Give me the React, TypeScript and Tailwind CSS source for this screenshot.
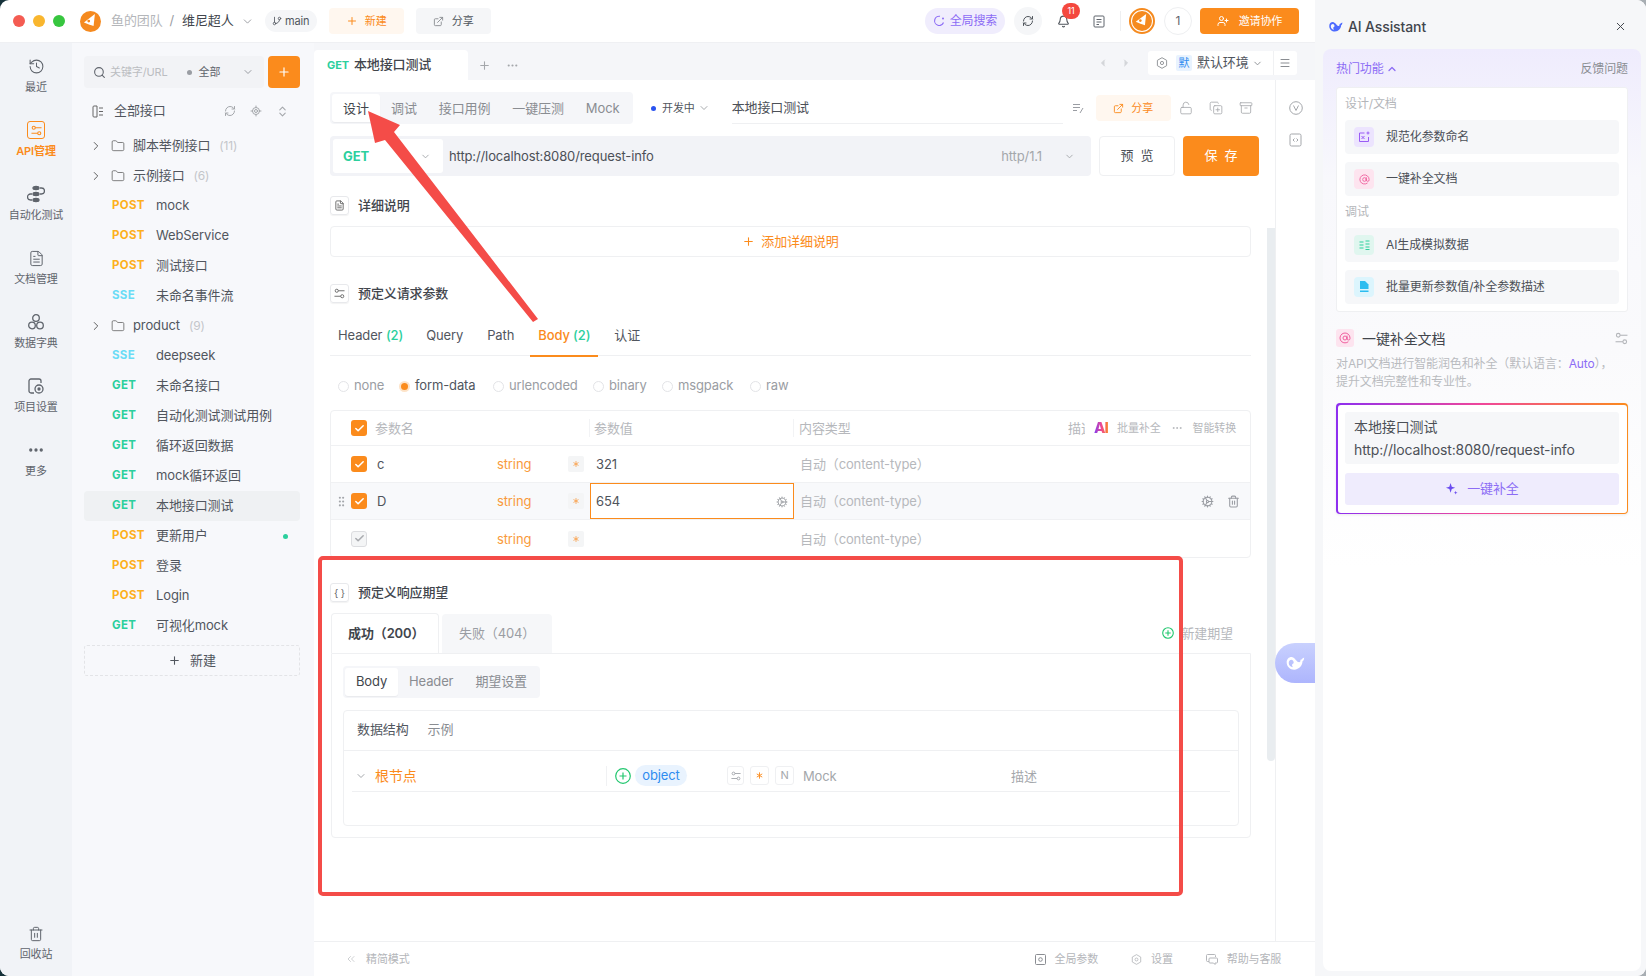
import React from "react";
import {
  History, FileText, Search, Plus, ChevronDown, ChevronRight, ChevronUp, ChevronLeft, Folder,
  RefreshCw, LocateFixed, ChevronsUpDown, Trash2, GitBranch, ExternalLink, Bell, LockOpen, CopyPlus, Archive,
  Menu, MoreHorizontal, X, ChevronsLeft, Check, Asterisk, GripVertical, UserPlus, AtSign, Cog,
} from "lucide-react";

const GET = "text-[#2ccf9d]";
const POST = "text-[#fdb01c]";
const SSE = "text-[#6adcf6]";

function Logo({ size = 21 }: { size?: number }) {
  return (
    <svg width={size} height={size} viewBox="0 0 24 24">
      <circle cx="12" cy="12" r="12" fill="#f58a1f" />
      <path d="M17 3.500 L15.500 17 L9.500 15 L4.500 13 Z" fill="#fff" />
      <circle cx="10" cy="11.500" r="1.600" fill="#f58a1f" />
    </svg>
  );
}

function Whale({ className = "", color = "#4d6bfe", size = 16 }: { className?: string; color?: string; size?: number }) {
  return (
    <svg width={size} height={size} viewBox="0 0 24 24" className={className}>
      <path
        fillRule="evenodd"
        d="M2 11 C2 7 5.500 4 9 5 C13 6.500 14 11 17 11 C18 11 18.800 10 18.500 8 C19.500 8.300 20 7.800 20.500 6.800 L23 5.500 C23 8 22.200 9.200 21 10 C21 15 17 20 11 20 C6 20 2 16 2 11 Z M8 8 C5.500 8 4.500 10 4.500 12 C4.500 15 7 17 9.500 17 C8 15 8 13 10 12.500 C11 12 10.500 8.500 8 8 Z"
        fill={color}
      />
    </svg>
  );
}

function GearHex({ size = 12 }: { size?: number }) {
  return (
    <svg width={size} height={size} viewBox="0 0 12 12" fill="none" stroke="currentColor" strokeWidth="0.900">
      <path d="M6 0.700 10.600 3.300v5.400L6 11.300 1.400 8.700V3.300Z" />
      <circle cx="6" cy="6" r="1.600" />
    </svg>
  );
}

function Sliders({ size = 11, width = 1 }: { size?: number; width?: number }) {
  return (
    <svg width={size} height={size} viewBox="0 0 12 12" fill="none" stroke="currentColor" strokeWidth={width}>
      <circle cx="3" cy="3" r="1.700" />
      <path d="M4.700 3H11.500" />
      <circle cx="9" cy="9" r="1.700" />
      <path d="M0.500 9H7.300" />
    </svg>
  );
}

function Star4({ size = 13 }: { size?: number }) {
  return (
    <svg width={size} height={size} viewBox="0 0 14 14" fill="#6a4cf0">
      <path d="M6 1 7.300 5 11 6.300 7.300 7.600 6 11.600 4.700 7.600 1 6.300 4.700 5Z" />
      <path d="M11.500 9.500 12 11 13.500 11.500 12 12 11.500 13.500 11 12 9.500 11.500 11 11Z" />
    </svg>
  );
}

function RailItem({ icon, label, active }: { icon: React.ReactNode; label: string; active?: boolean }) {
  return (
    <div className={`flex h-[64px] flex-col items-center pt-[6px] text-[11px] leading-[12px] ${active ? "font-semibold text-[#fb8b1c]" : "text-[#5f646c]"}`}>
      <div className="flex h-[20px] items-center justify-center">{icon}</div>
      <div className="mt-[5px] whitespace-nowrap">{label}</div>
    </div>
  );
}

function Method({ m }: { m: string }) {
  const c = m === "GET" ? GET : m === "POST" ? POST : SSE;
  return <span className={`w-[44px] shrink-0 text-[11.500px] font-bold tracking-[0.3px] ${c}`}>{m}</span>;
}

function ApiRow({ m, name, active, dot }: { m: string; name: string; active?: boolean; dot?: boolean }) {
  return (
    <div className={`ml-[12px] mr-[14px] flex h-[30px] items-center rounded-[4px] pl-[28px] pr-[12px] text-[13px] text-[#51565e] ${active ? "bg-[#eff1f3]" : ""}`}>
      <Method m={m} />
      <span className="flex-1">{name}</span>
      {dot && <span className="h-[5px] w-[5px] rounded-full bg-[#2ccf9d]" />}
    </div>
  );
}

function FolderRow({ name, count }: { name: string; count: string }) {
  return (
    <div className="flex h-[30px] items-center pl-[17px] text-[13px] text-[#51565e]">
      <ChevronRight size={14} strokeWidth={1.600} className="text-[#555]" />
      <Folder size={14} strokeWidth={1.400} className="ml-[8px] text-[#666]" />
      <span className="ml-[8px]">{name}</span>
      <span className="ml-[9px] text-[12px] text-[#c4c6ca]">{count}</span>
    </div>
  );
}

function SectionTitle({ icon, title }: { icon: React.ReactNode; title: string }) {
  return (
    <div className="flex h-[19px] items-center">
      <div className="flex h-[19px] w-[19px] items-center justify-center rounded-[3px] border border-[#e8e9ec] text-[#666] shadow-[0_1px_1px_rgba(0,0,0,0.05)]">{icon}</div>
      <span className="ml-[9px] text-[13px] font-medium text-[#41454c]">{title}</span>
    </div>
  );
}

function Radio({ label, on, w }: { label: string; on?: boolean; w: string }) {
  return (
    <div className={`flex items-center ${w} text-[13px] ${on ? "text-[#51565e]" : "text-[#9a9da3]"}`}>
      {on ? (
        <span className="flex h-[11px] w-[11px] items-center justify-center rounded-full bg-[#fde3c8]"><span className="h-[7px] w-[7px] rounded-full bg-[#fb8b1c]" /></span>
      ) : (
        <span className="h-[11px] w-[11px] rounded-full border border-[#e3e4e7]" />
      )}
      <span className="ml-[5px]">{label}</span>
    </div>
  );
}

function Check16({ off }: { off?: boolean }) {
  return (
    <span className={`flex h-[16px] w-[16px] shrink-0 items-center justify-center rounded-[3px] ${off ? "border border-[#dcdde0] bg-[#f4f5f6] text-[#a9abaf]" : "bg-[#fb8b1c] text-white"}`}>
      <Check size={11} strokeWidth={3.400} />
    </span>
  );
}

function ParamRow({ name, value, focus, last, hover }: { name: string; value?: string; focus?: boolean; last?: boolean; hover?: boolean }) {
  return (
    <div className={`relative flex h-[37px] items-center ${last ? "" : "border-b border-[#f0f1f3]"} ${hover ? "bg-[#f8f9fb]" : ""}`}>
      <div className="flex w-[20px] justify-center">{hover && <GripVertical size={13} className="text-[#a4a7ab]" />}</div>
      <Check16 off={last} />
      <span className="ml-[10px] w-[120px] pt-[2px] text-[13px] text-[#4f545b]">{name}</span>
      <span className="w-[71px] pt-[2px] text-[13px] text-[#f99a3c]">string</span>
      <span className="flex h-[16px] w-[16px] items-center justify-center rounded-[2px] bg-[#f4f5f6] text-[#f9a04a]"><Asterisk size={10} strokeWidth={2} /></span>
      <div className="w-[6px]" />
      <div className={`flex h-[36px] w-[204px] items-center px-[5px] pt-[1px] text-[13px] text-[#4f545b] ${focus ? "border border-[#fb8b1c] bg-white" : "pl-[6px]"}`}>
        <span className="flex-1">{value}</span>
        {focus && <Cog size={12} className="text-[#a4a7ab]" />}
      </div>
      <span className="ml-[6px] flex-1 pt-[2px] text-[13px] text-[#b6b8bc]">自动（content-type）</span>
      {hover && (
        <div className="mr-[10px] flex items-center gap-[13px] text-[#9a9da3]">
          <Cog size={13} />
          <Trash2 size={13} />
        </div>
      )}
    </div>
  );
}

function AiItem({ box, icon, label }: { box: string; icon: React.ReactNode; label: string }) {
  return (
    <div className="flex h-[34px] items-center rounded-[4px] bg-[#f6f7f9] pl-[9px]">
      <span className={`flex h-[20px] w-[20px] items-center justify-center rounded-[4px] ${box}`}>{icon}</span>
      <span className="ml-[12px] text-[12px] text-[#4c5057]">{label}</span>
    </div>
  );
}

function FootItem({ icon, label, cls }: { icon: React.ReactNode; label: string; cls: string }) {
  return (
    <div className={`flex items-center text-[11px] text-[#b4b6ba] ${cls}`}>
      {icon}
      <span className="ml-[9px]">{label}</span>
    </div>
  );
}

export default function App() {
  return (
    <div className="h-[976px] w-[1646px] bg-[linear-gradient(90deg,#16323a_50%,#a8aeb3_50%)]">
      <div className="relative flex h-[976px] w-[1646px] overflow-hidden rounded-[9px] bg-white font-['Inter','Noto_Sans_CJK_SC',sans-serif] tracking-[-0.12px] text-[#4c5057]">
        <div className="flex w-[1315px] shrink-0 flex-col">
          {/* Title bar */}
          <header className="flex h-[43px] shrink-0 items-center border-b border-[#eff0f3] pl-[13px] pr-[16px]">
            <span className="h-[12px] w-[12px] rounded-full bg-[#f45c52]" />
            <span className="ml-[8px] h-[12px] w-[12px] rounded-full bg-[#f9b62e]" />
            <span className="ml-[8px] h-[12px] w-[12px] rounded-full bg-[#37c63f]" />
            <span className="ml-[15px]"><Logo /></span>
            <span className="ml-[10px] text-[13px] text-[#b4b6ba]">鱼的团队</span>
            <span className="ml-[7px] text-[13px] text-[#9a9da3]">/</span>
            <span className="ml-[8px] text-[13px] text-[#41454c]">维尼超人</span>
            <ChevronDown size={13} strokeWidth={1.500} className="ml-[7px] text-[#8a8d92]" />
            <span className="ml-[11px] flex h-[22px] w-[52px] items-center justify-center rounded-full bg-[#f5f6f8] text-[11px] text-[#51565e]">
              <GitBranch size={10} className="mr-[3px]" />main
            </span>
            <span className="ml-[12px] flex h-[26px] w-[75px] items-center justify-center rounded-[4px] bg-[#fff7ef] text-[11px] text-[#fb8b1c]">
              <Plus size={12} className="mr-[7px]" />新建
            </span>
            <span className="ml-[12px] flex h-[26px] w-[75px] items-center justify-center rounded-[4px] bg-[#f5f6f8] text-[11px] text-[#51565e]">
              <ExternalLink size={11} className="mr-[8px] text-[#8a8d92]" />分享
            </span>
            <div className="flex-1" />
            <span className="flex h-[26px] w-[80px] items-center justify-center rounded-full bg-[#f0edfd] text-[12px] text-[#8c6cf5]">
              <svg width="12" height="12" viewBox="0 0 12 12" fill="none" stroke="currentColor" strokeWidth="1.100" className="mr-[5px]"><path d="M7 1.300A4.600 4.600 0 1 0 10.500 7.500" /><circle cx="10" cy="3.500" r="1" fill="currentColor" stroke="none" /></svg>
              全局搜索
            </span>
            <span className="ml-[9px] flex h-[28px] w-[28px] items-center justify-center rounded-full bg-[#f5f6f8] text-[#4f545b]"><RefreshCw size={12} /></span>
            <span className="relative ml-[15px] text-[#4f545b]">
              <Bell size={13} />
              <span className="absolute left-[5px] top-[-12px] flex h-[16px] w-[18px] items-center justify-center rounded-full bg-[#f4483e] text-[9px] leading-none text-white">11</span>
            </span>
            <span className="ml-[23px] text-[#5f646c]">
              <svg width="12" height="13" viewBox="0 0 12 13" fill="none" stroke="currentColor" strokeWidth="1"><rect x="1" y="1" width="10" height="11" rx="1" /><path d="M3.500 4.500h5M3.500 7h5M3.500 9.500h2.500" /></svg>
            </span>
            <span className="ml-[15px] h-[20px] w-px bg-[#eeeff1]" />
            <span className="ml-[8px] flex h-[26px] w-[26px] items-center justify-center rounded-full border-[2px] border-[#f58a1f]"><Logo size={20} /></span>
            <span className="ml-[9px] flex h-[28px] w-[28px] items-center justify-center rounded-full border border-[#eeeff1] text-[12px] text-[#5f646c]">1</span>
            <span className="ml-[8px] flex h-[26px] w-[99px] items-center justify-center rounded-[4px] bg-[#fb8b1c] text-[11px] text-white">
              <UserPlus size={12} className="mr-[10px]" />邀请协作
            </span>
          </header>

          <div className="flex min-h-0 flex-1">
            {/* Rail */}
            <nav className="flex w-[72px] shrink-0 flex-col bg-[#f1f3f7] pt-[7px]">
              <RailItem icon={<History size={17} strokeWidth={1.500} />} label="最近" />
              <RailItem active icon={<span className="flex h-[18px] w-[18px] items-center justify-center rounded-[3px] border-[1.500px] border-[#fb8b1c]"><Sliders size={11} width={1.200} /></span>} label="API管理" />
              <RailItem icon={<svg width="18" height="18" viewBox="0 0 18 18" fill="none" stroke="#5f646c" strokeWidth="1.300"><ellipse cx="9" cy="3" rx="3" ry="1.600" fill="#5f646c" /><ellipse cx="9" cy="9" rx="3" ry="1.600" fill="#5f646c" /><ellipse cx="9" cy="15" rx="3" ry="1.600" fill="#5f646c" /><path d="M13 3h1.500a2.500 2.500 0 0 1 0 6H13M5 9H3.500a2.500 2.500 0 0 0 0 6H5" /></svg>} label="自动化测试" />
              <RailItem icon={<FileText size={17} strokeWidth={1.400} />} label="文档管理" />
              <RailItem icon={<svg width="18" height="18" viewBox="0 0 18 18" fill="none" stroke="#5f646c" strokeWidth="1.300"><circle cx="9" cy="5" r="3.300" /><circle cx="5" cy="12.500" r="3.300" /><circle cx="13" cy="12.500" r="3.300" /></svg>} label="数据字典" />
              <RailItem icon={<svg width="18" height="18" viewBox="0 0 18 18" fill="none" stroke="#5f646c" strokeWidth="1.300"><path d="M7 16H4a2 2 0 0 1-2-2V4a2 2 0 0 1 2-2h8a2 2 0 0 1 2 2v2" /><circle cx="12" cy="12" r="4" /><circle cx="12" cy="12" r="1" fill="#5f646c" /></svg>} label="项目设置" />
              <RailItem icon={<MoreHorizontal size={18} strokeWidth={2.400} />} label="更多" />
              <div className="flex-1" />
              <div className="flex flex-col items-center pb-[16px] text-[11px] leading-[12px] text-[#5f646c]">
                <Trash2 size={16} strokeWidth={1.500} />
                <span className="mt-[6px]">回收站</span>
              </div>
            </nav>

            {/* Sidebar */}
            <aside className="flex w-[242px] shrink-0 flex-col bg-[#f7f8fb] pt-[13px]">
              <div className="flex items-center pl-[12px] pr-[14px]">
                <div className="flex h-[32px] w-[180px] items-center rounded-[4px] bg-[#f2f3f6] pl-[9px] pr-[10px]">
                  <Search size={13} className="text-[#5f646c]" />
                  <span className="ml-[4px] text-[11px] text-[#bbbdc1]">关键字/URL</span>
                  <span className="ml-[19px] h-[5px] w-[5px] rounded-full bg-[#9a9da3]" />
                  <span className="ml-[7px] text-[11px] text-[#5f646c]">全部</span>
                  <span className="flex-1" />
                  <ChevronDown size={12} className="text-[#9a9da3]" />
                </div>
                <span className="ml-[4px] flex h-[32px] w-[32px] items-center justify-center rounded-[4px] bg-[#fb8b1c] text-white"><Plus size={14} strokeWidth={2} /></span>
              </div>
              <div className="mt-[8px] flex h-[30px] items-center pl-[20px] text-[13px] text-[#51565e]">
                <svg width="12" height="13" viewBox="0 0 12 13" fill="none" stroke="#666" strokeWidth="1"><path d="M5 1H2a1 1 0 0 0-1 1v9a1 1 0 0 0 1 1h3M5 1v11M7 3h4M7 6.500h4M7 10h4" /></svg>
                <span className="ml-[10px]">全部接口</span>
                <span className="flex-1" />
                <RefreshCw size={12} className="text-[#a4a7ab]" />
                <LocateFixed size={12} className="ml-[14px] text-[#a4a7ab]" />
                <ChevronsUpDown size={13} className="ml-[14px] mr-[25px] text-[#a4a7ab]" />
              </div>
              <div className="mt-[5px]">
                <FolderRow name="脚本举例接口" count="(11)" />
                <FolderRow name="示例接口" count="(6)" />
                <ApiRow m="POST" name="mock" />
                <ApiRow m="POST" name="WebService" />
                <ApiRow m="POST" name="测试接口" />
                <ApiRow m="SSE" name="未命名事件流" />
                <FolderRow name="product" count="(9)" />
                <ApiRow m="SSE" name="deepseek" />
                <ApiRow m="GET" name="未命名接口" />
                <ApiRow m="GET" name="自动化测试测试用例" />
                <ApiRow m="GET" name="循环返回数据" />
                <ApiRow m="GET" name="mock循环返回" />
                <ApiRow m="GET" name="本地接口测试" active />
                <ApiRow m="POST" name="更新用户" dot />
                <ApiRow m="POST" name="登录" />
                <ApiRow m="POST" name="Login" />
                <ApiRow m="GET" name="可视化mock" />
              </div>
              <div className="ml-[12px] mr-[14px] mt-[4px] flex h-[31px] items-center justify-center rounded-[3px] border border-dashed border-[#e3e4e7] text-[13px] text-[#51565e]">
                <Plus size={13} className="mr-[9px]" />新建
              </div>
            </aside>

            {/* Main */}
            <main className="relative flex min-w-0 flex-1 flex-col">
              {/* Tab strip */}
              <div className="flex h-[37px] shrink-0 items-end bg-[#f5f6f9] pr-[18px]">
                <div className="flex h-[30px] w-[154px] items-center rounded-t-[4px] bg-white pl-[13px] text-[13px] text-[#41454c]">
                  <span className="mr-[5px] text-[11px] font-bold text-[#2ccf9d]">GET</span>
                  <span className="font-medium">本地接口测试</span>
                </div>
                <div className="flex h-[30px] items-center text-[#a4a7ab]">
                  <Plus size={13} className="ml-[10px]" />
                  <MoreHorizontal size={13} className="ml-[15px]" />
                </div>
                <div className="flex-1" />
                <div className="mb-[5px] flex h-[24px] items-center text-[#d3d5d9]">
                  <ChevronLeft size={12} fill="currentColor" />
                  <ChevronRight size={12} fill="currentColor" className="ml-[11px]" />
                  <div className="ml-[16px] flex h-[24px] w-[149px] items-center rounded-[3px] bg-white pl-[8px] text-[#8a8d92]">
                    <GearHex />
                    <span className="ml-[8px] flex h-[16px] w-[16px] items-center justify-center rounded-[2px] bg-[#e9f3fe] text-[11px] text-[#2e8cf0]">默</span>
                    <span className="ml-[5px] text-[13px] text-[#51565e]">默认环境</span>
                    <ChevronDown size={11} className="ml-[3px]" />
                    <span className="ml-[10px] flex h-[24px] w-[24px] items-center justify-center border-l border-[#f0f1f3]"><Menu size={12} /></span>
                  </div>
                </div>
              </div>

              <div className="flex min-h-0 flex-1">
                <div className="w-[961px] shrink-0 pl-[16px] pr-[24px] pt-[12px]">
                  {/* Tool row */}
                  <div className="flex h-[32px] items-center">
                    <div className="flex h-[32px] w-[303px] shrink-0 items-center rounded-[4px] bg-[#f5f6f9] pl-[2px] text-[13px] text-[#8a8d92]">
                      <span className="flex h-[28px] w-[48px] items-center justify-center rounded-[3px] bg-white pt-[1px] text-[#41454c] shadow-[0_1px_1px_rgba(0,0,0,0.05)]">设计</span>
                      <span className="ml-[11px] pt-[1px]">调试</span>
                      <span className="ml-[22px] pt-[1px]">接口用例</span>
                      <span className="ml-[22px] pt-[1px]">一键压测</span>
                      <span className="ml-[22px] pt-[1px]">Mock</span>
                    </div>
                    <span className="ml-[18px] h-[5px] w-[5px] shrink-0 rounded-full bg-[#2a53f0]" />
                    <span className="ml-[6px] shrink-0 text-[11px] text-[#51565e]">开发中</span>
                    <ChevronDown size={12} strokeWidth={1.500} className="ml-[3px] shrink-0 text-[#8a8d92]" />
                    <div className="ml-[22px] flex h-[32px] w-[331px] shrink-0 items-center border-b border-[#eff0f2] pt-[1px] text-[13px] text-[#4c5057]">本地接口测试</div>
                    <svg width="12" height="11" viewBox="0 0 12 11" fill="none" stroke="#9a9da3" strokeWidth="1" className="ml-[9px] shrink-0"><path d="M1 1.500h7M1 4.500h7M1 7.500h4M11 5 8 10" /></svg>
                    <span className="ml-[12px] flex h-[26px] w-[75px] shrink-0 items-center justify-center rounded-[4px] bg-[#fff7ef] text-[11px] text-[#fb8b1c]">
                      <ExternalLink size={11} className="mr-[7px]" />分享
                    </span>
                    <div className="ml-[8px] flex shrink-0 items-center gap-[16px] text-[#a4a7ab]">
                      <LockOpen size={14} strokeWidth={1.400} />
                      <CopyPlus size={14} strokeWidth={1.400} />
                      <Archive size={14} strokeWidth={1.400} />
                    </div>
                  </div>

                  {/* URL row */}
                  <div className="mt-[12px] flex h-[40px]">
                    <div className="flex h-[40px] w-[761px] shrink-0 items-center rounded-[4px] bg-[#f2f3f7] pl-[3px]">
                      <div className="flex h-[34px] w-[110px] items-center rounded-[3px] bg-white pl-[10px]">
                        <span className="flex-1 pt-[1px] text-[13px] font-bold text-[#2ccf9d]">GET</span>
                        <ChevronDown size={11} className="mr-[12px] text-[#a4a7ab]" />
                      </div>
                      <span className="ml-[6px] pt-[2px] text-[13px] text-[#4c5057]">http://localhost:8080/request-info</span>
                      <span className="flex-1" />
                      <span className="pt-[2px] text-[13px] text-[#a4a7ab]">http/1.1</span>
                      <ChevronDown size={11} className="ml-[22px] mr-[16px] text-[#a4a7ab]" />
                    </div>
                    <span className="ml-[8px] flex h-[40px] w-[76px] shrink-0 items-center justify-center rounded-[4px] border border-[#eff0f2] pl-[7px] text-[13px] tracking-[7px] text-[#4c5057]">预览</span>
                    <span className="ml-[8px] flex h-[40px] w-[76px] shrink-0 items-center justify-center rounded-[4px] bg-[#fb8b1c] pl-[7px] text-[13px] tracking-[7px] text-white">保存</span>
                  </div>

                  <div className="mt-[20px]">
                    <SectionTitle icon={<FileText size={11} />} title="详细说明" />
                  </div>
                  <div className="mt-[11px] flex h-[31px] items-center justify-center rounded-[4px] border border-[#eff0f2] text-[13px] text-[#fb8b1c]">
                    <Plus size={13} className="mr-[6px]" />添加详细说明
                  </div>

                  <div className="mt-[27px]">
                    <SectionTitle icon={<Sliders size={11} />} title="预定义请求参数" />
                  </div>
                  {/* Param tabs */}
                  <div className="mt-[20px] flex h-[33px] items-start border-b border-[#eff0f2] pt-[3px] text-[13px] text-[#51565e]">
                    <span className="ml-[8px]">Header <span className="font-medium text-[#2ccf9d]">(2)</span></span>
                    <span className="ml-[23px]">Query</span>
                    <span className="ml-[24px]">Path</span>
                    <span className="relative ml-[24px] font-medium text-[#fb8b1c]">
                      Body <span className="text-[#2ccf9d]">(2)</span>
                      <span className="absolute bottom-[-11px] left-[-8px] right-[-8px] h-[2px] bg-[#fb8b1c]" />
                    </span>
                    <span className="ml-[24px]">认证</span>
                  </div>
                  {/* Radios */}
                  <div className="mt-[20px] flex h-[20px] items-center pl-[8px]">
                    <Radio label="none" w="w-[61px]" />
                    <Radio on label="form-data" w="w-[94px]" />
                    <Radio label="urlencoded" w="w-[100px]" />
                    <Radio label="binary" w="w-[69px]" />
                    <Radio label="msgpack" w="w-[88px]" />
                    <Radio label="raw" w="w-[40px]" />
                  </div>
                  {/* Params table */}
                  <div className="mt-[14px] overflow-hidden rounded-[4px] border border-[#eff0f2]">
                    <div className="flex h-[35px] items-center border-b border-[#f0f1f3] text-[13px] text-[#b6b8bc]">
                      <div className="w-[20px]" />
                      <Check16 />
                      <span className="ml-[8px] w-[214px] pt-[2px]">参数名</span>
                      <span className="h-[18px] w-px bg-[#f2f3f5]" />
                      <span className="ml-[4px] w-[199px] pt-[2px]">参数值</span>
                      <span className="h-[18px] w-px bg-[#f2f3f5]" />
                      <span className="ml-[5px] w-[269px] pt-[2px]">内容类型</span>
                      <span className="w-[17px] overflow-hidden whitespace-nowrap pt-[2px]">描述</span>
                      <span className="ml-[9px] w-[15px] bg-[linear-gradient(90deg,#7c3cf5,#f0498f,#fb8b1c)] bg-clip-text text-[15px] font-extrabold leading-[16px] tracking-[-1px] text-transparent">AI</span>
                      <span className="ml-[8px] text-[11px]">批量补全</span>
                      <MoreHorizontal size={12} className="ml-[10px]" />
                      <span className="ml-[10px] text-[11px]">智能转换</span>
                    </div>
                    <ParamRow name="c" value="321" />
                    <ParamRow name="D" value="654" focus hover />
                    <ParamRow name="" last />
                  </div>

                  <div className="mt-[25px]">
                    <SectionTitle icon={<span className="text-[10px] leading-none">{"{ }"}</span>} title="预定义响应期望" />
                  </div>
                  {/* Response tabs */}
                  <div className="relative mt-[12px] flex h-[39px] items-end text-[13px]">
                    <span className="relative z-10 ml-[1px] flex h-[40px] w-[108px] items-center rounded-t-[4px] border border-b-0 border-[#eff0f2] bg-white pl-[16px] font-semibold text-[#41454c]">成功（200）</span>
                    <span className="ml-[3px] flex h-[39px] w-[110px] items-center rounded-t-[4px] bg-[#f6f7f9] pl-[17px] text-[#9a9da3]">失败（404）</span>
                    <span className="flex-1" />
                    <span className="mb-[10px] mr-[18px] flex items-center text-[#b6b8bc]">
                      <svg width="12" height="12" viewBox="0 0 12 12" fill="none" stroke="#22c76f" strokeWidth="1.100" className="-ml-[3px]"><circle cx="6" cy="6" r="5.300" /><path d="M6 3.300v5.400M3.300 6h5.400" /></svg>
                      <span className="ml-[7px]">新建期望</span>
                    </span>
                  </div>
                  {/* Response box */}
                  <div className="ml-[1px] h-[185px] rounded-b-[4px] border border-[#eff0f2] px-[11px] pt-[12px]">
                    <div className="flex h-[32px] w-[197px] items-center rounded-[4px] bg-[#f5f6f9] pl-[2px] text-[13px] text-[#8a8d92]">
                      <span className="flex h-[28px] w-[53px] items-center justify-center rounded-[3px] bg-white text-[#41454c] shadow-[0_1px_1px_rgba(0,0,0,0.05)]">Body</span>
                      <span className="ml-[11px]">Header</span>
                      <span className="ml-[22px]">期望设置</span>
                    </div>
                    <div className="mt-[12px] h-[116px] rounded-[4px] border border-[#eff0f2]">
                      <div className="flex h-[40px] items-center border-b border-[#eff0f2] pb-[2px] pl-[13px] text-[13px]">
                        <span className="text-[#51565e]">数据结构</span>
                        <span className="ml-[19px] text-[#8a8d92]">示例</span>
                      </div>
                      <div className="mx-[8px] flex h-[41px] items-center border-b border-[#eff0f2] pl-[3px] pt-[9px]">
                        <ChevronDown size={12} className="text-[#a4a7ab]" />
                        <span className="ml-[8px] w-[231px] text-[14px] text-[#fb8b1c]">根节点</span>
                        <span className="h-[20px] w-px bg-[#f0f1f3]" />
                        <svg width="16" height="16" viewBox="0 0 16 16" fill="none" stroke="#22c76f" strokeWidth="1.200" className="ml-[8px]"><circle cx="8" cy="8" r="7.300" /><path d="M8 4.500v7M4.500 8h7" /></svg>
                        <span className="ml-[4px] flex h-[21px] w-[52px] items-center justify-center rounded-full bg-[#e9f3fe] text-[13px] text-[#2e8cf0]">object</span>
                        <span className="ml-[40px] flex h-[19px] w-[17px] items-center justify-center rounded-[3px] border border-[#eff0f2] text-[#9a9da3]"><Sliders size={10} /></span>
                        <span className="ml-[6px] flex h-[19px] w-[19px] items-center justify-center rounded-[3px] border border-[#eff0f2] text-[#fb8b1c]"><Asterisk size={11} strokeWidth={2} /></span>
                        <span className="ml-[6px] flex h-[19px] w-[19px] items-center justify-center rounded-[3px] border border-[#eff0f2] text-[11px] text-[#a4a7ab]">N</span>
                        <span className="ml-[9px] w-[208px] pt-[2px] text-[13px] text-[#a4a7ab]">Mock</span>
                        <span className="pt-[2px] text-[13px] text-[#a4a7ab]">描述</span>
                      </div>
                    </div>
                  </div>
                </div>

                {/* Right strip */}
                <div className="flex flex-1 flex-col items-center border-l border-[#eff0f2] pt-[21px] text-[#a4a7ab]">
                  <svg width="14" height="14" viewBox="0 0 14 14" fill="none" stroke="currentColor" strokeWidth="1"><circle cx="7" cy="7" r="6.300" /><path d="M4.500 4.500 7 9.500l2.500-5" /></svg>
                  <svg width="13" height="14" viewBox="0 0 13 14" fill="none" stroke="currentColor" strokeWidth="1" className="mt-[18px]"><rect x="1" y="1" width="11" height="12" rx="1.500" /><path d="M5.500 5.500 4 7l1.500 1.500M7.500 5.500 9 7 7.500 8.500" /></svg>
                </div>
              </div>

              {/* Footer */}
              <footer className="flex h-[35px] shrink-0 items-center border-t border-[#eff0f2] pl-[31px]">
                <FootItem cls="" icon={<ChevronsLeft size={12} strokeWidth={1.300} />} label="精简模式" />
                <FootItem cls="ml-[625px]" icon={<svg width="11" height="11" viewBox="0 0 11 11" fill="none" stroke="#8a8d92" strokeWidth="1"><rect x="0.500" y="0.500" width="10" height="10" rx="1" /><circle cx="5.500" cy="5.500" r="1.800" /></svg>} label="全局参数" />
                <FootItem cls="ml-[33px]" icon={<GearHex size={11} />} label="设置" />
                <FootItem cls="ml-[33px]" icon={<svg width="12" height="11" viewBox="0 0 12 11" fill="none" stroke="currentColor" strokeWidth="1"><path d="M3 7.500H1.500a1 1 0 0 1-1-1v-5a1 1 0 0 1 1-1h7a1 1 0 0 1 1 1V3M4 4h6.500a1 1 0 0 1 1 1v3a1 1 0 0 1-1 1H9v1.500L7.500 9H4a1 1 0 0 1-1-1V5a1 1 0 0 1 1-1Z" /></svg>} label="帮助与客服" />
              </footer>

              {/* Scrollbar and floating button */}
              <div className="absolute left-[953px] top-[185px] h-[533px] w-[8px] rounded-b-[4px] bg-[#e9edf0]" />
              <div className="absolute right-0 top-[600px] flex h-[40px] w-[40px] items-center justify-center rounded-l-full bg-[linear-gradient(180deg,#c9d1fe,#adb5fd)]">
                <Whale color="#ffffff" size={20} />
              </div>
            </main>
          </div>
        </div>

        {/* AI panel */}
        <aside className="flex w-[331px] shrink-0 flex-col bg-[#f6f7f9] pl-[8px] pr-[5px]">
          <div className="flex h-[49px] shrink-0 items-center pl-[5px] pr-[14px] pt-[3px]">
            <Whale size={15} />
            <span className="ml-[5px] flex-1 text-[14px] font-medium text-[#41454c]">AI Assistant</span>
            <X size={13} strokeWidth={1.800} className="text-[#41454c]" />
          </div>
          <div className="h-[922px] rounded-[8px] bg-[linear-gradient(180deg,#efecfd_0px,#f8f8fc_130px,#fafafc_300px,#ffffff_520px)] px-[13px]">
            <div className="flex h-[38px] items-center justify-between pt-[1px] text-[12px]">
              <span className="flex items-center text-[#8c6cf5]">热门功能<ChevronUp size={12} strokeWidth={2.500} className="ml-[2px]" /></span>
              <span className="text-[#8a8d92]">反馈问题</span>
            </div>
            <div className="h-[225px] rounded-[3px] border border-[#eff0f2] bg-white px-[8px]">
              <div className="flex h-[32px] items-center text-[12px] text-[#b4b6ba]">设计/文档</div>
              <div className="flex flex-col gap-[8px]">
                <AiItem box="bg-[#ece4fe] text-[#9a5cf5]" icon={<svg width="12" height="12" viewBox="0 0 12 12" fill="none" stroke="currentColor" strokeWidth="1"><path d="M6.500 2H1.500v8.500h9V6M3.500 5l3 3M6.500 5l-3 3" /><path d="M10 0.500v3M8.500 2h3" /></svg>} label="规范化参数命名" />
                <AiItem box="bg-[#fde4ef] text-[#f0609f]" icon={<AtSign size={11} />} label="一键补全文档" />
              </div>
              <div className="flex h-[32px] items-center text-[12px] text-[#b4b6ba]">调试</div>
              <div className="flex flex-col gap-[8px]">
                <AiItem box="bg-[#e0f6ef] text-[#2ccf9d]" icon={<svg width="11" height="10" viewBox="0 0 11 10" fill="none" stroke="currentColor" strokeWidth="1.200"><path d="M0.500 2h4M0.500 5h4M0.500 8h4M6.500 1h4M6.500 4h4M6.500 7h4M6.500 9.500h4" /></svg>} label="AI生成模拟数据" />
                <AiItem box="bg-[#dcf5fd] text-[#2bbdf0]" icon={<svg width="10" height="12" viewBox="0 0 10 12" fill="currentColor"><path d="M1 0h5l3.500 3.500V8H1Z" /><path d="M1 9.500h8.500v1.500H1Z" /></svg>} label="批量更新参数值/补全参数描述" />
              </div>
            </div>
            <div className="mt-[17px] flex h-[18px] items-center">
              <span className="flex h-[18px] w-[18px] items-center justify-center rounded-[3px] bg-[#fde4ef] text-[#f0609f]"><AtSign size={12} /></span>
              <span className="ml-[8px] flex-1 text-[14px] text-[#41454c]">一键补全文档</span>
              <span className="text-[#b4b6ba]"><Sliders size={13} /></span>
            </div>
            <p className="mt-[8px] text-[12px] leading-[18px] text-[#b9bbbf]">
              对API文档进行智能润色和补全（默认语言：<span className="text-[#8c6cf5]">Auto</span>），<br />提升文档完整性和专业性。
            </p>
            <div className="mt-[12px] rounded-[4px] bg-[linear-gradient(90deg,#8e2ff0,#f0479a,#fb8b1c)] p-[1.500px] shadow-[0_1px_3px_rgba(0,0,0,0.08)]">
              <div className="h-[108px] rounded-[3px] bg-white px-[7.500px] pt-[7px]">
                <div className="h-[52px] rounded-[3px] bg-[#f6f7f9] pl-[9px] pt-[3px] text-[14px] leading-[23px] text-[#4c5057]">
                  本地接口测试<br />http://localhost:8080/request-info
                </div>
                <div className="mt-[9px] flex h-[32px] items-center justify-center rounded-[3px] bg-[#efecfd] text-[13px] text-[#8c6cf5]">
                  <span className="mr-[9px] flex"><Star4 /></span>一键补全
                </div>
              </div>
            </div>
          </div>
        </aside>

        {/* Annotations */}
        <div className="pointer-events-none absolute left-[318px] top-[556px] h-[340px] w-[865px] rounded-[5px] border-[4px] border-[#f44c48]" />
        <svg className="pointer-events-none absolute left-0 top-0" width="1646" height="976">
          <polygon points="368,111 400,125 394,132 538,319 533,322 385,140 375,143" fill="#f44c48" />
        </svg>
      </div>
    </div>
  );
}
